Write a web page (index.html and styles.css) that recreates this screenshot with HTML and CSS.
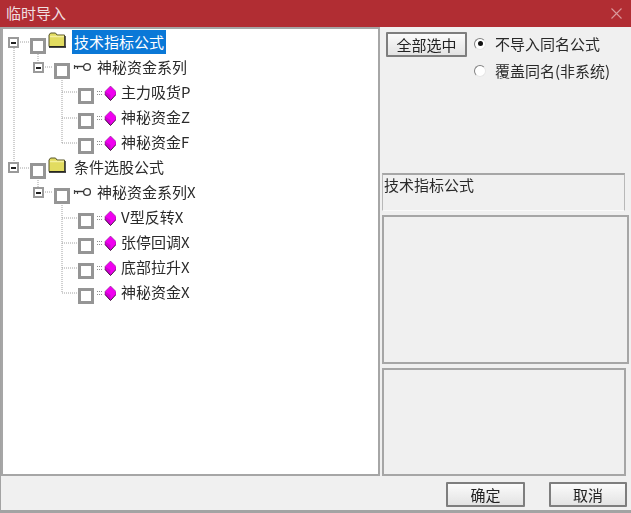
FILE: index.html
```html
<!DOCTYPE html>
<html lang="zh-CN">
<head>
<meta charset="utf-8">
<title>临时导入</title>
<link rel="stylesheet" href="styles.css">
</head>
<body>
<svg class="defs" width="0" height="0" aria-hidden="true">
  <symbol id="folder" viewBox="0 0 18 16">
    <path d="M1 14.5V3L2.5 1H7.5L9 3H16.5V14.5Z" fill="#e2dc60" stroke="#57542a" stroke-width="1"/>
    <path d="M2 4.5H16" stroke="#f4f0a0" stroke-width="1.5"/>
    <path d="M1 15H18" stroke="#1c1c1c" stroke-width="1.6"/>
    <path d="M17.2 4V15" stroke="#333" stroke-width="1.2"/>
  </symbol>
  <symbol id="key" viewBox="0 0 18 10">
    <circle cx="14" cy="5" r="3.4" fill="#fff" stroke="#3a3a3a" stroke-width="1.3"/>
    <path d="M1 4.5H10.5" stroke="#333" stroke-width="1.4"/>
    <path d="M1.5 3V7M4.5 5V7" stroke="#444" stroke-width="1.2"/>
  </symbol>
  <symbol id="gem" viewBox="0 0 19 16">
    <path d="M0 6.5H6M0 9.5H6" stroke="#8c8c8c" stroke-width="1" stroke-dasharray="1 1" fill="none"/>
    <path d="M8 6.5 13.5 1 19 6.5V9.5L13.5 15.5 8 9.5Z" fill="#f000f0"/>
    <path d="M8 6.5V9.5L13.5 15.5V10Z" fill="#d000d0"/>
    <path d="M8 9.5 13.5 15.5 19 9.5" fill="none" stroke="#2a0a2a" stroke-width=".9"/>
    <path d="M8 9.5V6.5L13.5 1 19 6.5V9.5" fill="none" stroke="#6a206a" stroke-width=".5"/>
  </symbol>
</svg>
<div class="window">
  <header class="titlebar">
    <span class="title">临时导入</span>
    <svg class="close" width="11" height="11" viewBox="0 0 11 11"><path d="M.5.5 10.5 10.5M10.5.5.5 10.5" stroke="#d9999c" stroke-width="1.1"/></svg>
  </header>
  <main class="main">
    <section class="tree">
      <svg class="tree-lines" width="375" height="300" viewBox="3 29 375 300">
        <path d="M14 48V163M20 42H29M38 54V61M45 67H53M62 80V143M62 92H77M62 118H77M62 143H77M20 168H29M38 180V187M45 192H53M62 205V293M62 218H77M62 243H77M62 268H77M62 293H77" fill="none" stroke="#a0a0a0" stroke-width="1" stroke-dasharray="1 1"/>
      </svg>
      <div class="row root"><span class="exp"></span><span class="chk"></span><svg class="ico-folder"><use href="#folder"/></svg><span class="lbl sel">技术指标公式</span></div>
      <div class="row group"><span class="exp"></span><span class="chk"></span><svg class="ico-key"><use href="#key"/></svg><span class="lbl">神秘资金系列</span></div>
      <div class="row leaf"><span class="chk"></span><svg class="ico-gem"><use href="#gem"/></svg><span class="lbl">主力吸货P</span></div>
      <div class="row leaf"><span class="chk"></span><svg class="ico-gem"><use href="#gem"/></svg><span class="lbl">神秘资金Z</span></div>
      <div class="row leaf"><span class="chk"></span><svg class="ico-gem"><use href="#gem"/></svg><span class="lbl">神秘资金F</span></div>
      <div class="row root"><span class="exp"></span><span class="chk"></span><svg class="ico-folder"><use href="#folder"/></svg><span class="lbl">条件选股公式</span></div>
      <div class="row group"><span class="exp"></span><span class="chk"></span><svg class="ico-key"><use href="#key"/></svg><span class="lbl">神秘资金系列X</span></div>
      <div class="row leaf"><span class="chk"></span><svg class="ico-gem"><use href="#gem"/></svg><span class="lbl">V型反转X</span></div>
      <div class="row leaf"><span class="chk"></span><svg class="ico-gem"><use href="#gem"/></svg><span class="lbl">张停回调X</span></div>
      <div class="row leaf"><span class="chk"></span><svg class="ico-gem"><use href="#gem"/></svg><span class="lbl">底部拉升X</span></div>
      <div class="row leaf"><span class="chk"></span><svg class="ico-gem"><use href="#gem"/></svg><span class="lbl">神秘资金X</span></div>
    </section>
    <aside class="side">
      <div class="options">
        <button class="btn btn-all" type="button">全部选中</button>
        <div class="radios">
          <div class="radio-row"><span class="radio on"></span><span>不导入同名公式</span></div>
          <div class="radio-row"><span class="radio"></span><span>覆盖同名(非系统)</span></div>
        </div>
      </div>
      <div class="desc">技术指标公式</div>
      <div class="panel panel-a"></div>
      <div class="panel panel-b"></div>
    </aside>
  </main>
  <footer class="footer">
    <button class="btn btn-ok" type="button">确定</button>
    <button class="btn btn-cancel" type="button">取消</button>
  </footer>
</div>
</body>
</html>
```
FILE: styles.css
```css
* { box-sizing: border-box; }
html, body { margin: 0; padding: 0; }
body {
  width: 631px;
  height: 513px;
  overflow: hidden;
  font-family: "Noto Sans CJK SC", "Liberation Sans", sans-serif;
  font-size: 15px;
  color: #2a2a2a;
  background: #f0f0f0;
}
.defs { position: absolute; }
.window {
  width: 631px;
  height: 513px;
  display: flex;
  flex-direction: column;
  border-bottom: 3px solid #a3a3a3;
  filter: blur(0.35px);
}
.titlebar {
  flex: 0 0 27px;
  background: #b12d33;
  color: #f0dfe0;
  display: flex;
  align-items: center;
  justify-content: space-between;
  padding: 0 9px 1px 6px;
}
.title { font-size: 15px; line-height: 20px; }
.close { display: block; }
.main {
  flex: 0 0 449px;
  display: flex;
  border-left: 1px solid #a3a3a3;
}
.tree {
  position: relative;
  width: 379px;
  height: 449px;
  background: #fff;
  border: 2px solid #a6a6a6;
  padding-top: 1px;
}
.tree-lines { position: absolute; left: 0; top: 0; }
.row {
  position: relative;
  height: 25px;
  display: flex;
  align-items: center;
}
.root { padding-left: 5px; }
.group { padding-left: 30px; }
.leaf { padding-left: 75px; }
.exp {
  position: relative;
  width: 11px;
  height: 11px;
  border: 2px solid #9a9a9a;
  background: #fff;
  margin-right: 11px;
}
.group .exp { margin-right: 10px; }
.exp::after {
  content: "";
  position: absolute;
  left: 1px;
  top: 2.5px;
  width: 5px;
  height: 2px;
  background: #222;
}
.chk {
  flex: none;
  width: 16px;
  height: 16px;
  margin-top: 6px;
  border: 3px solid #959595;
  background: #fff;
}
.ico-folder { width: 18px; height: 16px; margin: -5px 0 0 2px; flex: none; }
.ico-key { width: 18px; height: 10px; margin: -2px 0 0 3px; flex: none; }
.ico-gem { width: 19px; height: 16px; margin: 1px 0 0 3px; flex: none; }
.lbl {
  line-height: 24px;
  padding: 0 2px;
  white-space: nowrap;
  margin: -2px 0 0 4px;
}
.root .lbl { margin-left: 6px; }
.leaf .lbl { margin-left: 3px; }
.sel { background: #0a78d7; color: #fff; }
.side {
  flex: 1;
  padding-left: 2px;
  display: flex;
  flex-direction: column;
}
.options {
  flex: 0 0 146px;
  display: flex;
  align-items: flex-start;
  padding: 5px 0 0 4px;
}
.btn {
  font: inherit;
  color: #222;
  padding: 0;
  height: 25px;
  border: 2px solid #7e7e7e;
  border-radius: 1px;
  background: linear-gradient(#fbfbfb, #e3e3e3);
}
.btn-all { width: 81px; }
.radios { margin: -1px 0 0 7px; }
.radio-row {
  height: 25px;
  display: flex;
  align-items: center;
  gap: 9px;
  white-space: nowrap;
}
.radio-row + .radio-row { margin-top: 2px; }
.radio {
  width: 12px;
  height: 12px;
  border-radius: 50%;
  background: #fff;
  border: 1px solid #808080;
  border-right-color: #e6e6e6;
  border-bottom-color: #e6e6e6;
  position: relative;
}
.radio.on::after {
  content: "";
  position: absolute;
  left: 2.5px;
  top: 2.5px;
  width: 5px;
  height: 5px;
  border-radius: 50%;
  background: #111;
}
.desc {
  width: 243px;
  height: 38px;
  border: 1px solid #b8b8b8;
  border-top: 2px solid #a6a6a6;
  line-height: 20px;
  padding-left: 1px;
  border-bottom-color: #fafafa;
}
.panel { border: 2px solid #a6a6a6; background: #f0f0f0; }
.panel-a { width: 247px; height: 149px; margin-top: 4px; }
.panel-b { width: 244px; height: 108px; margin-top: 4px; }
.footer {
  flex: 1;
  display: flex;
  align-items: flex-start;
  justify-content: flex-end;
  gap: 24px;
  padding: 6px 4px 0 0;
  border-left: 1px solid #a3a3a3;
}
.btn-ok { width: 79px; }
.btn-cancel { width: 78px; }
```
